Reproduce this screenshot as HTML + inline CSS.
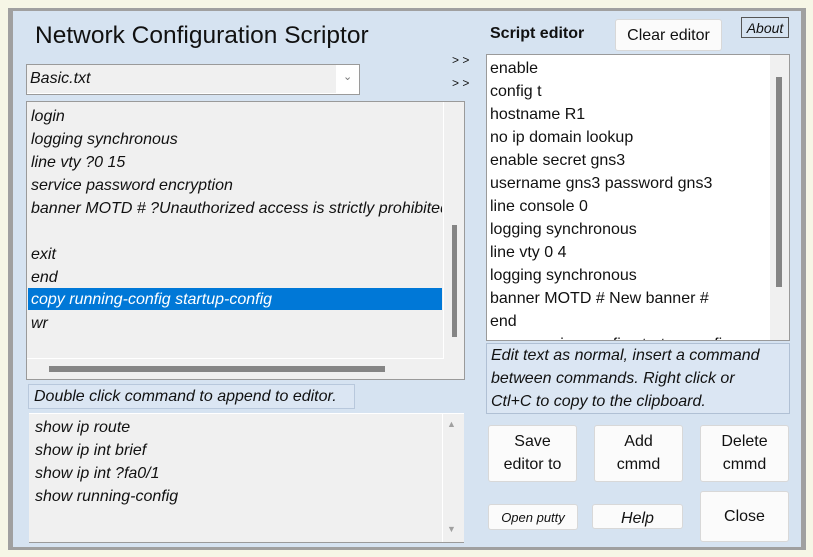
<!DOCTYPE html>
<html><head><style>
body{margin:0;width:813px;height:557px;background:#f6f6e6;position:relative;overflow:hidden;font-family:"Liberation Sans",sans-serif;font-size:16px;color:#111}
.a{position:absolute;box-sizing:border-box}
.frame{left:8px;top:8px;width:798px;height:542px;background:#a0a0a0}
.panel{left:13px;top:11px;width:788px;height:536px;background:#d6e3f1}
.row{position:absolute;left:4px;height:23px;line-height:23px;white-space:nowrap;font-style:italic}
.erow{position:absolute;left:3px;height:23px;line-height:23px;white-space:nowrap}
.btn{background:#fbfbfb;border:1px solid #d8d8d8;border-radius:3px;text-align:center;color:#111}
</style></head><body>
<div class="a frame"></div>
<div class="a panel"></div>
<div class="a" style="left:35px;top:22px;font-size:24.5px;color:#111">Network Configuration Scriptor</div>
<div class="a" style="left:26px;top:64px;width:334px;height:31px;background:#fff;border:1px solid #9a9a9a"></div>
<div class="a" style="left:27px;top:65px;width:309px;height:28px;background:#f0f0f0"></div>
<div class="a" style="left:30px;top:65px;line-height:28px;font-style:italic">Basic.txt</div>
<div class="a" style="left:343px;top:70px;font-size:11px;color:#777">&#8964;</div>
<div class="a" style="left:452px;top:53px;font-size:12px">&gt; &gt;</div>
<div class="a" style="left:452px;top:76px;font-size:12px">&gt; &gt;</div>
<div class="a" style="left:26px;top:101px;width:439px;height:279px;background:#f0f0f0;border:1px solid #9a9a9a;overflow:hidden">
<div class="a" style="left:416px;top:0;width:1px;height:256px;background:#fff"></div>
<div class="a" style="left:0;top:256px;width:417px;height:1px;background:#fff"></div>
<div class="a" style="left:0;top:0;width:415px;height:256px;overflow:hidden">
<div class="row" style="top:3px">login</div>
<div class="row" style="top:26px">logging synchronous</div>
<div class="row" style="top:49px">line vty ?0 15</div>
<div class="row" style="top:72px">service password encryption</div>
<div class="row" style="top:95px">banner MOTD # ?Unauthorized access is strictly prohibited</div>
<div class="row" style="top:141px">exit</div>
<div class="row" style="top:164px">end</div>
<div class="a" style="left:1px;top:186px;width:414px;height:22px;background:#0078d7"></div>
<div class="row" style="top:186px;color:#fff">copy running-config startup-config</div>
<div class="row" style="top:210px">wr</div>
</div>
<div class="a" style="left:425px;top:123px;width:5px;height:112px;background:#858585"></div>
<div class="a" style="left:22px;top:264px;width:336px;height:6px;background:#858585"></div>
</div>
<div class="a" style="left:28px;top:384px;width:327px;height:25px;border:1px solid #b8c8dc;background:#dbe6f3;font-style:italic;line-height:23px;padding-left:5px">Double click command to append to editor.</div>
<div class="a" style="left:29px;top:413px;width:435px;height:130px;background:#f0f0f0;border-bottom:1px solid #9a9a9a;border-top:1px solid #fff">
<div class="a" style="left:413px;top:0;width:1px;height:128px;background:#fff"></div>
<div class="row" style="top:2px;left:6px">show ip route</div>
<div class="row" style="top:25px;left:6px">show ip int brief</div>
<div class="row" style="top:48px;left:6px">show ip int ?fa0/1</div>
<div class="row" style="top:71px;left:6px">show running-config</div>
<div class="a" style="left:418px;top:5px;font-size:9px;color:#a0a0a0">&#9650;</div>
<div class="a" style="left:418px;top:110px;font-size:9px;color:#a0a0a0">&#9660;</div>
</div>
<div class="a" style="left:490px;top:25px;font-weight:bold;font-size:16px">Script editor</div>
<div class="a btn" style="left:615px;top:19px;width:107px;height:32px;line-height:31px">Clear editor</div>
<div class="a" style="left:741px;top:17px;width:48px;height:21px;border:1px solid #555;font-style:italic;font-size:14px;text-align:center;line-height:20px">About</div>
<div class="a" style="left:486px;top:54px;width:304px;height:287px;background:#fff;border:1px solid #9a9a9a;overflow:hidden">
<div class="a" style="left:283px;top:0;width:20px;height:287px;background:#f0f0f0"></div>
<div class="a" style="left:289px;top:22px;width:6px;height:210px;background:#858585"></div>
<div class="erow" style="top:2px">enable</div>
<div class="erow" style="top:25px">config t</div>
<div class="erow" style="top:48px">hostname R1</div>
<div class="erow" style="top:71px">no ip domain lookup</div>
<div class="erow" style="top:94px">enable secret gns3</div>
<div class="erow" style="top:117px">username gns3 password gns3</div>
<div class="erow" style="top:140px">line console 0</div>
<div class="erow" style="top:163px">logging synchronous</div>
<div class="erow" style="top:186px">line vty 0 4</div>
<div class="erow" style="top:209px">logging synchronous</div>
<div class="erow" style="top:232px">banner MOTD # New banner #</div>
<div class="erow" style="top:255px">end</div>
<div class="erow" style="top:278px">copy running-config startup-config</div>
</div>
<div class="a" style="left:486px;top:343px;width:304px;height:71px;border:1px solid #b0c0d4;background:#dbe6f3;font-style:italic;line-height:23px;padding-left:4px;white-space:nowrap">Edit text as normal, insert a command<br>between commands. Right click or<br>Ctl+C to copy to the clipboard.</div>
<div class="a btn" style="left:488px;top:425px;width:89px;height:57px;line-height:23px;padding-top:4px">Save<br>editor to</div>
<div class="a btn" style="left:594px;top:425px;width:89px;height:57px;line-height:23px;padding-top:4px">Add<br>cmmd</div>
<div class="a btn" style="left:700px;top:425px;width:89px;height:57px;line-height:23px;padding-top:4px">Delete<br>cmmd</div>
<div class="a btn" style="left:488px;top:504px;width:90px;height:26px;line-height:25px;font-style:italic;font-size:13px">Open putty</div>
<div class="a btn" style="left:592px;top:504px;width:91px;height:25px;line-height:27px;font-style:italic">Help</div>
<div class="a btn" style="left:700px;top:491px;width:89px;height:51px;line-height:50px">Close</div>
</body></html>
